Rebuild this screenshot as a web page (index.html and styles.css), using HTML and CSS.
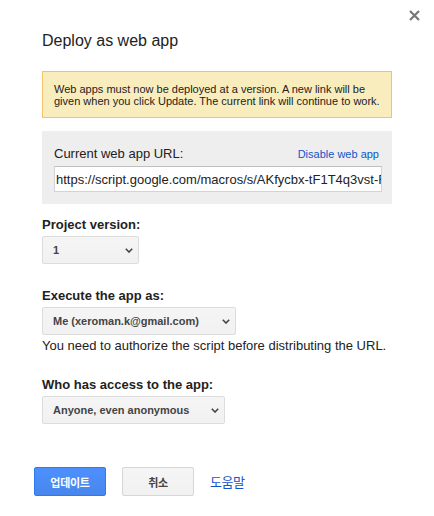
FILE: index.html
```html
<!DOCTYPE html>
<html lang="en">
<head>
<meta charset="utf-8">
<title>Deploy as web app</title>
<link rel="stylesheet" href="styles.css">
</head>
<body>
<div class="dialog">
  <button class="close" aria-label="Close">
    <svg width="11" height="11" viewBox="0 0 11 11"><path d="M1 1L10 10M10 1L1 10" stroke="#777" stroke-width="2.2" fill="none"/></svg>
  </button>
  <h1 class="title">Deploy as web app</h1>
  <div class="notice">Web apps must now be deployed at a version. A new link will be given when you click Update. The current link will continue to work.</div>
  <div class="url-box">
    <div class="url-head">
      <span class="url-label">Current web app URL:</span>
      <a class="small-link" href="#">Disable web app</a>
    </div>
    <input class="url-input" type="text" readonly value="https://script.google.com/macros/s/AKfycbx-tF1T4q3vst-FcWq8mBmVd0/exec">
  </div>

  <div class="field">
    <div class="label">Project version:</div>
    <div class="select w-version"><span>1</span><svg class="chev" width="8" height="5" viewBox="0 0 8 5"><path d="M0.8 0.8L4 4L7.2 0.8" stroke="#444" stroke-width="1.6" fill="none"/></svg></div>
  </div>

  <div class="field gap-lg">
    <div class="label">Execute the app as:</div>
    <div class="select w-exec"><span>Me (xeroman.k@gmail.com)</span><svg class="chev" width="8" height="5" viewBox="0 0 8 5"><path d="M0.8 0.8L4 4L7.2 0.8" stroke="#444" stroke-width="1.6" fill="none"/></svg></div>
    <div class="hint">You need to authorize the script before distributing the URL.</div>
  </div>

  <div class="field gap-md">
    <div class="label">Who has access to the app:</div>
    <div class="select w-access"><span>Anyone, even anonymous</span><svg class="chev" width="8" height="5" viewBox="0 0 8 5"><path d="M0.8 0.8L4 4L7.2 0.8" stroke="#444" stroke-width="1.6" fill="none"/></svg></div>
  </div>

  <div class="buttons">
    <button class="btn btn-primary">업데이트</button>
    <button class="btn btn-default">취소</button>
    <a class="help" href="#">도움말</a>
  </div>
</div>
</body>
</html>
```

FILE: styles.css
```css
html, body {
  margin: 0;
  padding: 0;
  background: #fff;
}
body {
  font-family: "Liberation Sans", Arial, "Noto Sans CJK KR", sans-serif;
  color: #222;
}
.dialog {
  position: relative;
  width: 434px;
  height: 516px;
  box-sizing: border-box;
  padding: 31px 42px 0 42px;
}
.close {
  position: absolute;
  top: 10px;
  left: 409px;
  width: 11px;
  height: 11px;
  padding: 0;
  border: 0;
  background: none;
  display: flex;
}
.title {
  margin: 0 0 20px 0;
  font-size: 16px;
  line-height: 20px;
  font-weight: normal;
  color: #222;
}
.notice {
  background: #f9edbe;
  border: 1px solid #f0c36d;
  padding: 11px 11px 10px 11px;
  font-size: 11px;
  line-height: 12px;
  color: #222;
}
.url-box {
  margin-top: 13px;
  background: #eeeeee;
  padding: 15px 10px 12px 12px;
}
.url-head {
  display: flex;
  justify-content: space-between;
  align-items: flex-start;
  padding-right: 3px;
}
.url-label {
  font-size: 13px;
  line-height: 16px;
  color: #222;
}
.small-link {
  font-size: 11px;
  line-height: 16px;
  color: #15c;
  text-decoration: none;
}
.url-input {
  display: block;
  margin: 4px 0 0 0;
  width: 100%;
  height: 26px;
  box-sizing: border-box;
  background: #fff;
  border: 1px solid #d3d3d3;
  border-top-color: #c0c0c0;
  border-radius: 0;
  padding: 0 0 0 1px;
  font-family: "Liberation Sans", Arial, sans-serif;
  font-size: 13px;
  line-height: 24px;
  color: #222;
  outline: none;
}
.field {
  margin-top: 13px;
}
.gap-lg {
  margin-top: 24px;
}
.gap-md {
  margin-top: 23px;
}
.label {
  font-size: 13px;
  line-height: 16px;
  font-weight: bold;
  color: #222;
}
.select {
  margin-top: 3px;
  height: 28px;
  box-sizing: border-box;
  display: flex;
  align-items: center;
  justify-content: space-between;
  padding: 0 5px 0 10px;
  background: linear-gradient(#f5f5f5, #f1f1f1);
  border: 1px solid #dcdcdc;
  border-radius: 2px;
  font-size: 11px;
  font-weight: bold;
  color: #444;
}
.chev {
  display: block;
}
.w-version { width: 97px; }
.w-exec { width: 194px; }
.w-access { width: 183px; }
.hint {
  margin-top: 3px;
  font-size: 13px;
  line-height: 16px;
  color: #222;
}
.buttons {
  margin-top: 43px;
  margin-left: -8px;
  display: flex;
  align-items: center;
  gap: 16px;
}
.btn {
  width: 72px;
  height: 29px;
  box-sizing: border-box;
  border-radius: 2px;
  font-family: "Liberation Sans", Arial, "Noto Sans CJK KR", sans-serif;
  font-size: 11px;
  font-weight: bold;
  padding: 0;
  letter-spacing: -0.3px;
}
.btn-primary {
  background: linear-gradient(#4d90fe, #4787ed);
  border: 1px solid #3079ed;
  color: #fff;
}
.btn-default {
  background: linear-gradient(#f5f5f5, #f1f1f1);
  border: 1px solid #d6d6d6;
  color: #444;
}
.help {
  font-size: 13px;
  color: #15c;
  text-decoration: none;
  letter-spacing: -0.4px;
}
```
